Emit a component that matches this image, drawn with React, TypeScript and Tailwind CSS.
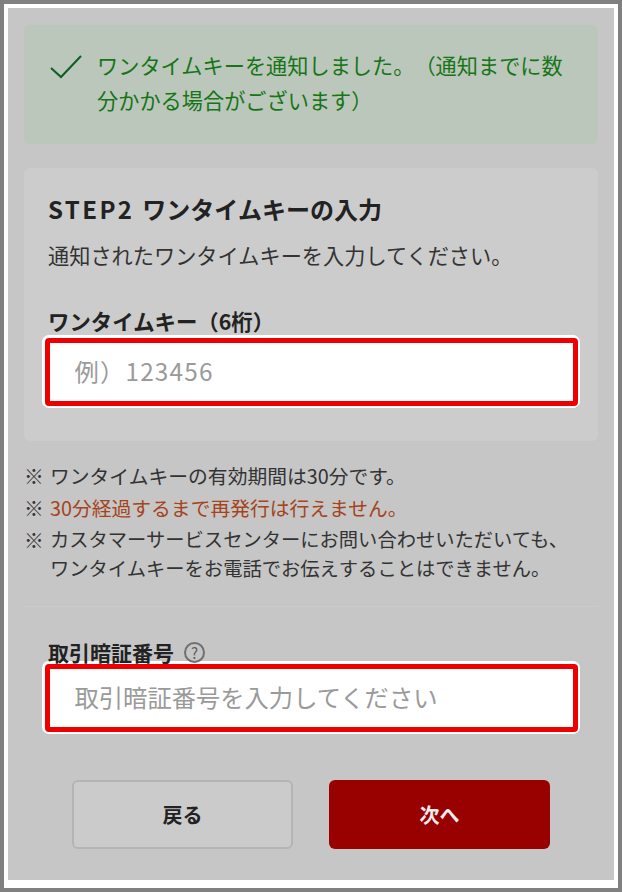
import React from 'react';

const font = 'font-["Noto_Sans_CJK_JP","Noto_Sans",sans-serif] [text-spacing-trim:space-all]';

const KeyInput = ({ placeholder, spaced }: { placeholder: string; spaced?: boolean }) => (
  <div className="h-[73px] rounded-[7px] bg-white p-[2.5px]">
    <input
      readOnly
      placeholder={placeholder}
      className={`h-full w-full rounded-[4px] border-[5px] border-[#ee0000] bg-white pb-[2px] pl-[25px] text-[24.3px] outline-none placeholder:text-[#9a9a9a] ${spaced ? 'tracking-[1.2px]' : ''}`}
    />
  </div>
);

const App: React.FC = () => {
  return (
    <div className={`${font} h-[892px] w-[622px] border-[4px] border-[#808080] bg-white p-[4px]`}>
      <div className="flex h-[872px] flex-col bg-[#c6c6c6] px-[16px] pt-[17px] text-[#333333]">
        {/* Notice */}
        <div className="flex h-[119px] items-start gap-[13px] rounded-[6px] bg-[#bcc7bc] pl-[26px] pr-[30px] pt-[22px] text-[#167516]">
          <svg width="34" height="26" viewBox="0 0 34 26" fill="none" className="mt-[7px] shrink-0">
            <path d="M1 14 L11 23 L31 2" stroke="#0b5f1f" strokeWidth="2" />
          </svg>
          <p className="text-[21.2px] leading-[35px]">
            ワンタイムキーを通知しました。（通知までに数分かかる場合がございます）
          </p>
        </div>

        {/* Step card */}
        <div className="mt-[24px] h-[273px] rounded-[6px] bg-[#cccccc] px-[24px] pt-[24px]">
          <h2 className="text-[24px] font-bold leading-[34px] text-[#222222]">
            <span className="mr-[8px] tracking-[2.4px]">STEP2</span>ワンタイムキーの入力
          </h2>
          <p className="mt-[13px] text-[21.2px] leading-[32px]">通知されたワンタイムキーを入力してください。</p>
          <p className="mt-[34px] text-[21.4px] font-bold leading-[32px] text-[#222222]">ワンタイムキー（6桁）</p>
          <div className="-mx-[6px] -mt-[2px]">
            <KeyInput placeholder="例）123456" spaced />
          </div>
        </div>

        {/* Notes */}
        <ul className="mt-[20px] flex flex-col gap-[3px] text-[19.8px] leading-[29px]">
          <li className="flex gap-[4px]">
            <span className="w-[22px] shrink-0">※</span>
            <span>ワンタイムキーの有効期間は30分です。</span>
          </li>
          <li className="flex gap-[4px]">
            <span className="w-[22px] shrink-0">※</span>
            <span className="text-[#a5431c]">30分経過するまで再発行は行えません。</span>
          </li>
          <li className="flex gap-[4px]">
            <span className="w-[22px] shrink-0">※</span>
            <span className="whitespace-nowrap text-[19.3px]">
              カスタマーサービスセンターにお問い合わせいただいても、
              <br />
              ワンタイムキーをお電話でお伝えすることはできません。
            </span>
          </li>
        </ul>

        <div className="mt-[23px] h-px bg-[#cbcbcb]" />

        {/* PIN */}
        <div className="mt-[31px] px-[24px]">
          <div className="flex items-center gap-[10px]">
            <span className="text-[21px] font-bold leading-[28px] text-[#222222]">取引暗証番号</span>
            <span className="flex h-[21px] w-[21px] items-center justify-center rounded-full border-[2px] border-[#707070] text-[15px] leading-none text-[#606060]">
              ?
            </span>
          </div>
          <div className="-mx-[6px] -mt-[5px]">
            <KeyInput placeholder="取引暗証番号を入力してください" />
          </div>
        </div>

        {/* Buttons */}
        <div className="mt-[46px] flex justify-center gap-[36px]">
          <button className="h-[69px] w-[221px] rounded-[6px] border-[2px] border-[#b4b4b4] bg-[#cbcbcb] text-[20px] font-bold text-[#222222]">
            戻る
          </button>
          <button className="h-[69px] w-[221px] rounded-[6px] bg-[#990000] text-[20px] font-bold text-[#eeeeee]">
            次へ
          </button>
        </div>
      </div>
    </div>
  );
};

export default App;
